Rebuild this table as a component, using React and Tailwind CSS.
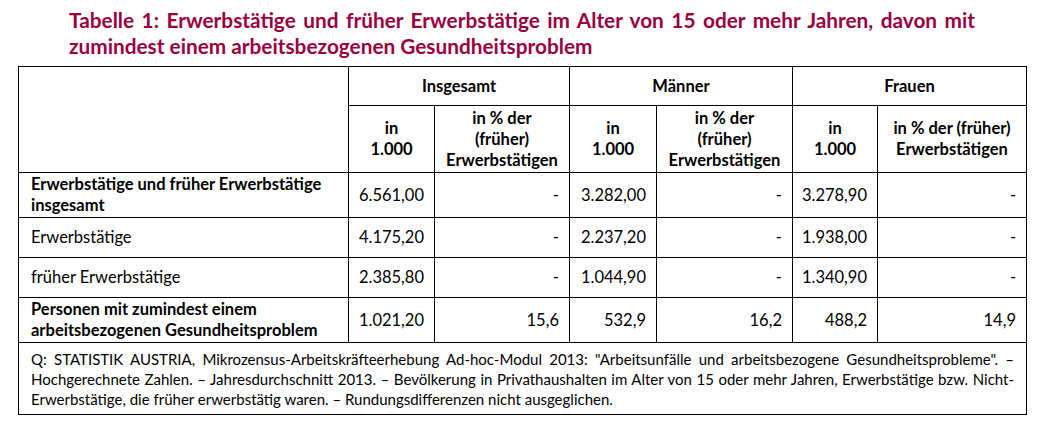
const font = { fontFamily: 'Lato, "Open Sans", sans-serif' };

const rows = [
  { label: ['Erwerbstätige und früher Erwerbstätige', 'insgesamt'], bold: true, h: 'h-[45px]', v: ['6.561,00', '-', '3.282,00', '-', '3.278,90', '-'] },
  { label: ['Erwerbstätige'], h: 'h-[40px]', v: ['4.175,20', '-', '2.237,20', '-', '1.938,00', '-'] },
  { label: ['früher Erwerbstätige'], h: 'h-[40px]', v: ['2.385,80', '-', '1.044,90', '-', '1.340,90', '-'] },
  { label: ['Personen mit zumindest einem', 'arbeitsbezogenen Gesundheitsproblem'], bold: true, h: 'h-[45px]', v: ['1.021,20', '15,6', '532,9', '16,2', '488,2', '14,9'] },
];

function PctHead({ wide }) {
  if (wide) {
    return (
      <>
        in % der (früher)
        <br />
        Erwerbstätigen
      </>
    );
  }
  return (
    <>
      in % der
      <br />
      (früher)
      <br />
      Erwerbstätigen
    </>
  );
}

export default function App() {
  return (
    <div className="w-[1042px] h-[427px] bg-white text-black" style={font}>
      {/* Titel */}
      <div className="pl-[69px] pt-[7px] w-[975px] text-[20.8px] leading-[26px] font-bold text-[#98003f]">
        <div className="text-justify [text-align-last:justify]">
          Tabelle 1: Erwerbstätige und früher Erwerbstätige im Alter von 15 oder mehr Jahren, davon mit
        </div>
        <div>zumindest einem arbeitsbezogenen Gesundheitsproblem</div>
      </div>

      <div className="pl-[18px] pt-[7px]">
        <table className="table-fixed border-collapse w-[1008px] text-[16.5px] leading-[21px]">
          <colgroup>
            <col className="w-[330px]" />
            <col className="w-[86px]" />
            <col className="w-[135px]" />
            <col className="w-[87px]" />
            <col className="w-[136px]" />
            <col className="w-[85px]" />
            <col className="w-[149px]" />
          </colgroup>
          <thead className="font-bold">
            <tr className="h-[39px]">
              <th rowSpan={2} className="border border-black"></th>
              <th colSpan={2} className="border border-black text-center">Insgesamt</th>
              <th colSpan={2} className="border border-black text-center">Männer</th>
              <th colSpan={2} className="border border-black text-center">Frauen</th>
            </tr>
            <tr className="h-[67px]">
              <th className="border border-black text-center">in<br />1.000</th>
              <th className="border border-black text-center"><PctHead /></th>
              <th className="border border-black text-center">in<br />1.000</th>
              <th className="border border-black text-center"><PctHead /></th>
              <th className="border border-black text-center">in<br />1.000</th>
              <th className="border border-black text-center"><PctHead wide /></th>
            </tr>
          </thead>
          <tbody>
            {rows.map((r, i) => (
              <tr key={i} className={r.h}>
                <td className={`border border-black pl-3 pr-2 ${r.bold ? 'font-bold' : ''}`}>
                  {r.label.map((l, j) => (
                    <div key={j}>{l}</div>
                  ))}
                </td>
                {r.v.map((v, j) => (
                  <td key={j} className="border border-black text-right pr-[10px]">{v}</td>
                ))}
              </tr>
            ))}
            <tr className="h-[72px]">
              <td colSpan={7} className="border border-black px-3 text-[15px] leading-[20px] align-middle">
                <div className="text-justify [text-align-last:justify]">
                  Q: STATISTIK AUSTRIA, Mikrozensus-Arbeitskräfteerhebung Ad-hoc-Modul 2013: "Arbeitsunfälle und arbeitsbezogene Gesundheitsprobleme". –
                </div>
                <div className="text-justify [text-align-last:justify]">
                  Hochgerechnete Zahlen. – Jahresdurchschnitt 2013. – Bevölkerung in Privathaushalten im Alter von 15 oder mehr Jahren, Erwerbstätige bzw. Nicht-
                </div>
                <div>Erwerbstätige, die früher erwerbstätig waren. – Rundungsdifferenzen nicht ausgeglichen.</div>
              </td>
            </tr>
          </tbody>
        </table>
      </div>
    </div>
  );
}
